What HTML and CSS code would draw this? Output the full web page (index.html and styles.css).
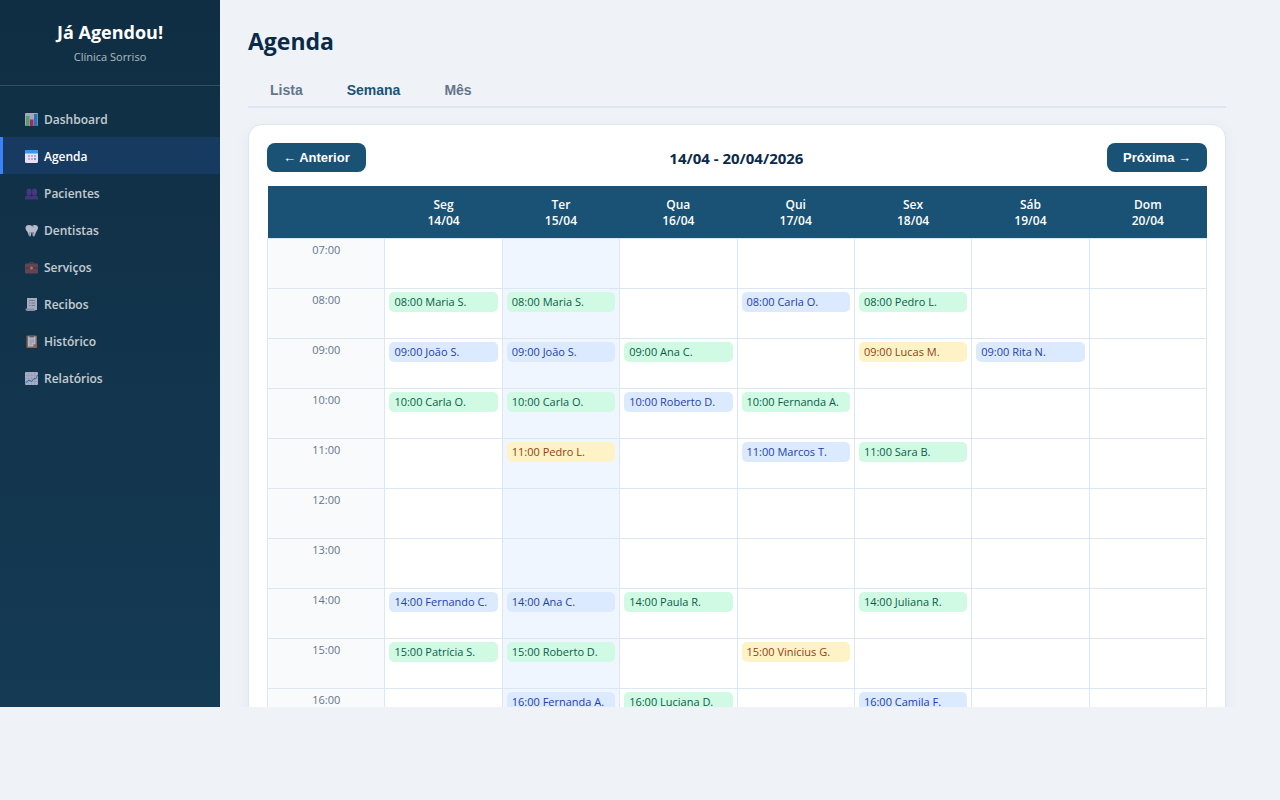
FILE: index.html
```html
<!DOCTYPE html>
<html lang="pt-BR">
<head>
    <meta charset="UTF-8">
    <meta name="viewport" content="width=device-width, initial-scale=1.0">
    <title>Já Agendou! - Agenda</title>
    <link rel="stylesheet" href="styles.css">
</head>
<body>
    <div class="app">
        <aside class="sidebar">
            <div class="sidebar-header">
                <h2>Já Agendou!</h2>
                <p>Clínica Sorriso</p>
            </div>
            <nav class="menu">
                <a href="#">
                    <svg class="icon" viewBox="0 0 26 26"><rect width="26" height="26" rx="2" fill="#d9d3e8"/><path d="M0 6h26M0 12h26M0 18h26" stroke="#bdb5d0"/><rect x="2" y="6" width="7" height="20" fill="#6fc37b"/><rect x="10" y="13" width="7" height="13" fill="#d8276f"/><rect x="18" y="2" width="7" height="24" fill="#2c8fd8"/></svg>
                    Dashboard
                </a>
                <a href="#" class="active">
                    <svg class="icon" viewBox="0 0 26 26"><rect width="26" height="26" rx="3" fill="#e9e0f6"/><path d="M0 7V3a3 3 0 0 1 3-3h20a3 3 0 0 1 3 3v4z" fill="#2f9bf8"/><path d="M6 10h4v4H6zM12 10h4v4h-4zM18 10h4v4h-4zM6 16h4v4H6zM12 16h4v4h-4z" fill="#b9aecb"/><path d="M18 16h4v4h-4z" fill="#4ba5f5"/></svg>
                    Agenda
                </a>
                <a href="#">
                    <svg class="icon" viewBox="0 0 26 26"><path d="M3 8a5 5 0 0 1 10 0v4a5 5 0 0 1-10 0zM14 8a5 5 0 0 1 10 0v4a5 5 0 0 1-10 0z" fill="#5a3a94"/><path d="M0 25v-3a5 5 0 0 1 5-5h5a3 3 0 0 1 3 3 3 3 0 0 1 3-3h5a5 5 0 0 1 5 5v3z" fill="#543590"/></svg>
                    Pacientes
                </a>
                <a href="#">
                    <svg class="icon" viewBox="0 0 26 26"><path d="M1 8C1 2 8 0 14 4c5-4 12-2 12 3 0 6-4 7-5 12-1 4-2 6-4 6-3 0-1-9-3-9s-1 9-4 9c-2 0-3-3-4-7-1-4-5-5-5-10z" fill="#f0eaf5"/><path d="M13 4c2 0 3 2 5 2M9 24l1-8M18 24l-1-8" stroke="#b5a9c6" stroke-width="2" fill="none"/></svg>
                    Dentistas
                </a>
                <a href="#">
                    <svg class="icon" viewBox="0 0 26 26"><path d="M9 6V3h8v3" stroke="#574250" stroke-width="2" fill="none"/><rect y="5" width="26" height="20" rx="2" fill="#7e4b58"/><path d="M0 14h26" stroke="#5d3546" stroke-width="2"/><circle cx="13" cy="14" r="3" fill="#e28a5b"/></svg>
                    Serviços
                </a>
                <a href="#">
                    <svg class="icon" viewBox="0 0 26 26"><path d="M4 0h20v24H4z" fill="#d5d4e3"/><path d="M1 21h17c0 3 2 5 4 5H4c-2 0-3-2-3-5z" fill="#b6a9d1"/><path d="M8 5h12M8 10h3M13 10h7M8 15h3M13 15h7" stroke="#8f92ab" stroke-width="2"/></svg>
                    Recibos
                </a>
                <a href="#">
                    <svg class="icon" viewBox="0 0 26 26"><rect x="3" y="1" width="21" height="25" rx="2" fill="#ba754b"/><path d="M6 3h15v15l-5 5H6z" fill="#e6e4f2"/><path d="M21 18l-5 5v-5z" fill="#a99fc1"/><path d="M9 1h9v4H9z" fill="#69718b"/><path d="M9 10h9M9 14h9M9 18h5" stroke="#b0b0c6" stroke-width="2"/></svg>
                    Histórico
                </a>
                <a href="#">
                    <svg class="icon" viewBox="0 0 26 26"><rect width="26" height="26" rx="2" fill="#d9d6e9"/><path d="M0 7h26M0 13h26M0 19h26M7 0v26M13 0v26M19 0v26" stroke="#bdb7d3"/><path d="M1 22l7-6 5 3 5-6 3 1 5-9" stroke="#2186cf" stroke-width="2" fill="none"/></svg>
                    Relatórios
                </a>
            </nav>
        </aside>

        <main class="content">
            <h1>Agenda</h1>
            <div class="tabs">
                <button type="button">Lista</button>
                <button type="button" class="active">Semana</button>
                <button type="button">Mês</button>
            </div>

            <section class="card">
                <div class="week-nav">
                    <button type="button">← Anterior</button>
                    <h3>14/04 - 20/04/2026</h3>
                    <button type="button">Próxima →</button>
                </div>
                <table class="week">
                    <thead>
                        <tr>
                            <th></th>
                            <th>Seg<br>14/04</th>
                            <th>Ter<br>15/04</th>
                            <th>Qua<br>16/04</th>
                            <th>Qui<br>17/04</th>
                            <th>Sex<br>18/04</th>
                            <th>Sáb<br>19/04</th>
                            <th>Dom<br>20/04</th>
                        </tr>
                    </thead>
                    <tbody>
                        <tr>
                            <td class="hour">07:00</td>
                            <td></td>
                            <td class="today"></td>
                            <td></td>
                            <td></td>
                            <td></td>
                            <td></td>
                            <td></td>
                        </tr>
                        <tr>
                            <td class="hour">08:00</td>
                            <td><div class="event green">08:00 Maria S.</div></td>
                            <td class="today"><div class="event green">08:00 Maria S.</div></td>
                            <td></td>
                            <td><div class="event blue">08:00 Carla O.</div></td>
                            <td><div class="event green">08:00 Pedro L.</div></td>
                            <td></td>
                            <td></td>
                        </tr>
                        <tr>
                            <td class="hour">09:00</td>
                            <td><div class="event blue">09:00 João S.</div></td>
                            <td class="today"><div class="event blue">09:00 João S.</div></td>
                            <td><div class="event green">09:00 Ana C.</div></td>
                            <td></td>
                            <td><div class="event yellow">09:00 Lucas M.</div></td>
                            <td><div class="event blue">09:00 Rita N.</div></td>
                            <td></td>
                        </tr>
                        <tr>
                            <td class="hour">10:00</td>
                            <td><div class="event green">10:00 Carla O.</div></td>
                            <td class="today"><div class="event green">10:00 Carla O.</div></td>
                            <td><div class="event blue">10:00 Roberto D.</div></td>
                            <td><div class="event green">10:00 Fernanda A.</div></td>
                            <td></td>
                            <td></td>
                            <td></td>
                        </tr>
                        <tr>
                            <td class="hour">11:00</td>
                            <td></td>
                            <td class="today"><div class="event yellow">11:00 Pedro L.</div></td>
                            <td></td>
                            <td><div class="event blue">11:00 Marcos T.</div></td>
                            <td><div class="event green">11:00 Sara B.</div></td>
                            <td></td>
                            <td></td>
                        </tr>
                        <tr>
                            <td class="hour">12:00</td>
                            <td></td>
                            <td class="today"></td>
                            <td></td>
                            <td></td>
                            <td></td>
                            <td></td>
                            <td></td>
                        </tr>
                        <tr>
                            <td class="hour">13:00</td>
                            <td></td>
                            <td class="today"></td>
                            <td></td>
                            <td></td>
                            <td></td>
                            <td></td>
                            <td></td>
                        </tr>
                        <tr>
                            <td class="hour">14:00</td>
                            <td><div class="event blue">14:00 Fernando C.</div></td>
                            <td class="today"><div class="event blue">14:00 Ana C.</div></td>
                            <td><div class="event green">14:00 Paula R.</div></td>
                            <td></td>
                            <td><div class="event green">14:00 Juliana R.</div></td>
                            <td></td>
                            <td></td>
                        </tr>
                        <tr>
                            <td class="hour">15:00</td>
                            <td><div class="event green">15:00 Patrícia S.</div></td>
                            <td class="today"><div class="event green">15:00 Roberto D.</div></td>
                            <td></td>
                            <td><div class="event yellow">15:00 Vinícius G.</div></td>
                            <td></td>
                            <td></td>
                            <td></td>
                        </tr>
                        <tr>
                            <td class="hour">16:00</td>
                            <td></td>
                            <td class="today"><div class="event blue">16:00 Fernanda A.</div></td>
                            <td><div class="event green">16:00 Luciana D.</div></td>
                            <td></td>
                            <td><div class="event blue">16:00 Camila F.</div></td>
                            <td></td>
                            <td></td>
                        </tr>
                    </tbody>
                </table>
            </section>
        </main>
    </div>
</body>
</html>
```
FILE: styles.css
```css
* {
    box-sizing: border-box;
    margin: 0;
    padding: 0;
}
body {
    font-family: "Segoe UI", "Open Sans", "Noto Sans", sans-serif;
    background-color: #eff3f8;
    color: #0a2a4a;
}
.app {
    display: flex;
    height: calc(100vh - 93px);
    overflow: hidden;
}

/* Sidebar */
.sidebar {
    width: 220px;
    flex-shrink: 0;
    background: linear-gradient(180deg, #0f2e43, #153a54);
    color: white;
}
.sidebar-header {
    padding: 20px;
    text-align: center;
    border-bottom: 1px solid rgba(255, 255, 255, 0.15);
}
.sidebar-header h2 {
    font-size: 18px;
    line-height: 25px;
}
.sidebar-header p {
    margin-top: 4px;
    font-size: 11px;
    line-height: 16px;
    opacity: 0.65;
}
.menu {
    padding: 14px 0;
}
.menu a {
    display: flex;
    align-items: center;
    gap: 6px;
    height: 37px;
    padding: 2px 22px 0;
    border-left: 3px solid transparent;
    color: white;
    font-size: 12px;
    font-weight: 600;
    text-decoration: none;
    opacity: 0.75;
}
.menu a.active {
    background-color: #173b60;
    border-left-color: #3b82f6;
    opacity: 1;
}
.icon {
    width: 13px;
    height: 13px;
}

/* Content */
.content {
    flex: 1;
    padding: 24px 54px 0 28px;
    overflow: hidden;
}
h1 {
    font-size: 23px;
    line-height: 34px;
}
.tabs {
    display: flex;
    margin: 14px 0 16px;
    border-bottom: 2px solid #dbe7f3;
}
.tabs button {
    padding: 10px 22px 8px;
    border: none;
    background: none;
    color: #64748b;
    font: bold 14px/16px "Liberation Sans", Arial, sans-serif;
    cursor: pointer;
}
.tabs button.active {
    color: #1a5276;
}
.card {
    padding: 18px;
    background-color: white;
    border: 1px solid #dbe7f3;
    border-radius: 14px;
    box-shadow: 0 4px 16px rgba(10, 42, 74, 0.05);
}
.week-nav {
    display: flex;
    justify-content: space-between;
    align-items: center;
    margin-bottom: 14px;
}
.week-nav button {
    padding: 7px 16px;
    border: none;
    border-radius: 8px;
    background-color: #1a5276;
    color: white;
    font: bold 13px/15px "Liberation Sans", Arial, sans-serif;
    cursor: pointer;
}
.week-nav button:hover {
    background-color: #154360;
}
.week-nav h3 {
    font-size: 15px;
    line-height: 20px;
}

/* Weekly calendar */
.week {
    width: 100%;
    table-layout: fixed;
    border-collapse: collapse;
}
.week th {
    padding: 11px 4px 9px;
    background-color: #1a5276;
    color: white;
    font-size: 12px;
    font-weight: 600;
    line-height: 16px;
}
.week td {
    height: 50px;
    padding: 3px 4px;
    border: 1px solid #dbe7f3;
    vertical-align: top;
}
.week .hour {
    background-color: #f8fafc;
    color: #64748b;
    font-size: 11px;
    line-height: 15px;
    text-align: center;
}
.week .today {
    background-color: #eff6ff;
}
.event {
    padding: 3px 5px;
    border-radius: 5px;
    font-size: 11px;
    line-height: 14px;
    white-space: nowrap;
    overflow: hidden;
}
.green {
    background-color: #d1fae5;
    color: #065f46;
}
.blue {
    background-color: #dbeafe;
    color: #1e40af;
}
.yellow {
    background-color: #fef3c7;
    color: #92400e;
}
```
